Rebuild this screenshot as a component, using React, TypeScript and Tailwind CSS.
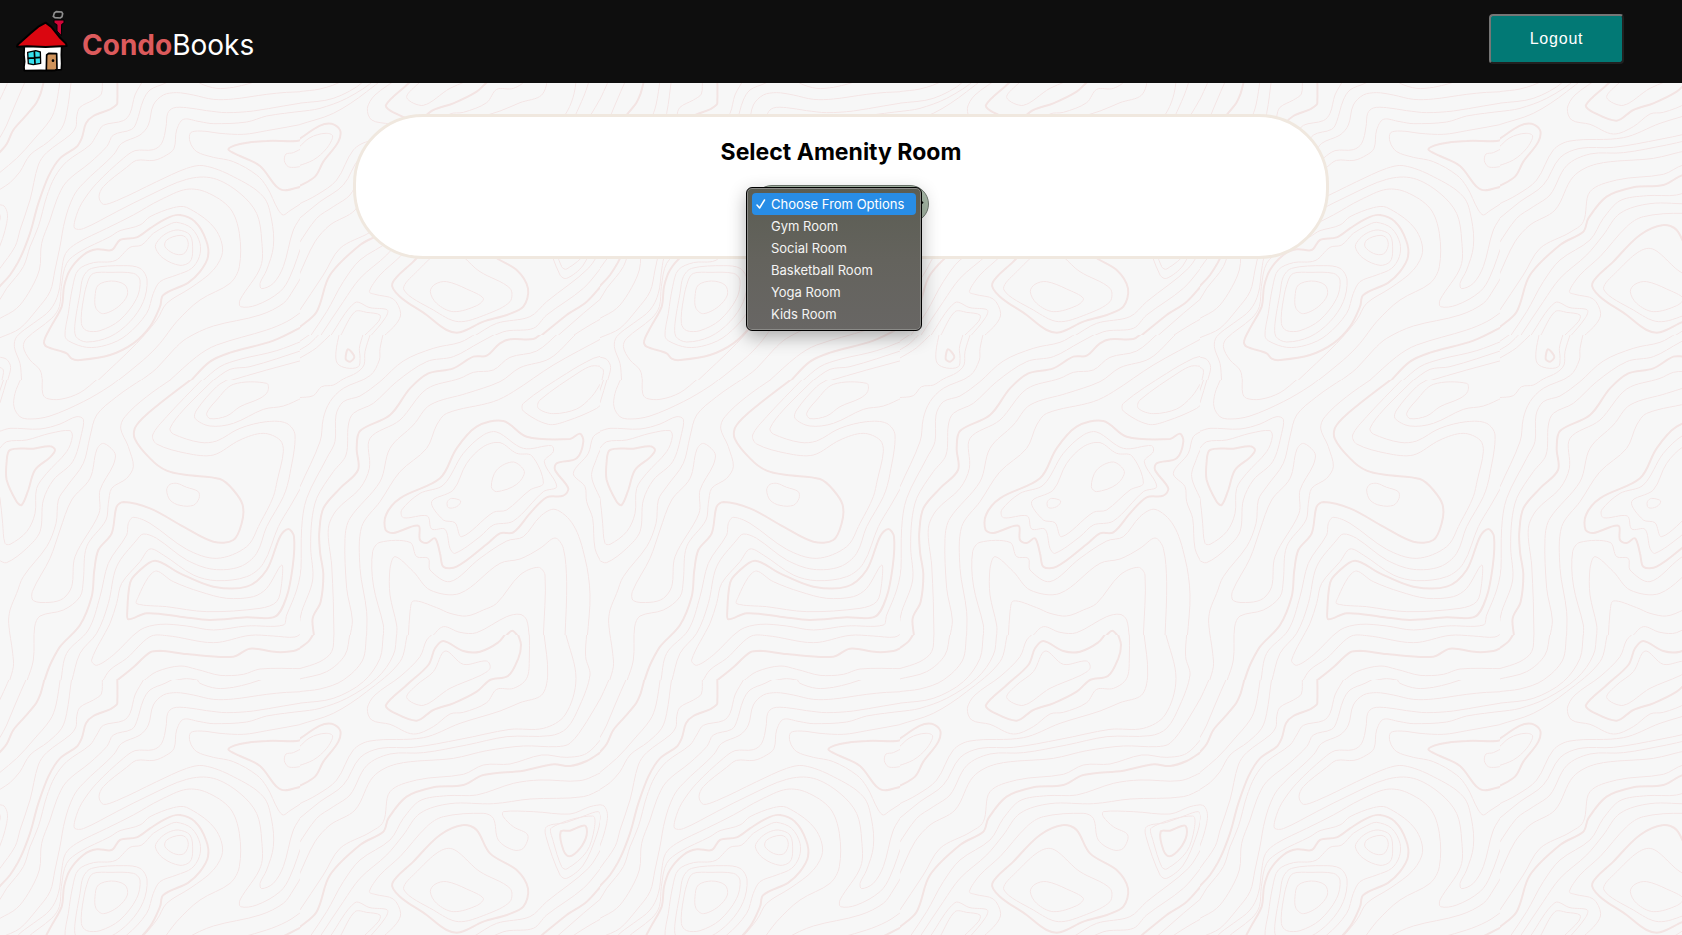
import React from "react";

type Line = { p: string; bold?: boolean };

const t = (p: string): Line => ({ p });
const b = (p: string): Line => ({ p, bold: true });

/* Contour lines, each a list of points on a 900 x 900 sheet. A trailing "z" closes the line. */
const northWest: Line[] = [
  t("30,-8 22,10 0,58 -5,65"),
  t("80,-5 45,75 20,135 0,172 -8,185"),
  b("134,-5 122,40 108,70 75,110 40,150 20,192 0,216 -8,222"),
  t("181,-5 168,75 150,120 100,180 50,235 0,277 -8,284"),
  t("215,-5 200,100 185,145 145,185 90,225 60,275 30,308 0,328 -8,333"),
  t("307,-5 304,42 280,60 240,82 230,110 228,140 210,165 140,218 115,255 90,360 60,450 45,500 0,565 -8,575"),
  b("352,-5 352,60 350,74 330,88 280,108 258,130 245,175 230,200 180,235 145,290 115,370 90,460 60,535 30,585 0,618 -8,626"),
  t("432,-3 405,45 390,100 370,122 310,136 290,165 270,195 200,245 165,290 140,350 115,440 90,500 70,560 20,625 0,658 -8,665"),
  t("520,-3 495,10 450,30 430,60 410,125 395,148 340,165 320,200 270,248 200,305 170,360 150,420 125,490 118,570 85,640 50,685 0,715 -8,718"),
  t("590,-5 600,10 650,25 700,22 750,10 790,-3"),
  t("910,35 860,37 800,43 700,57 640,58 580,45 530,38 490,45 460,75 445,135 420,165 365,190 340,225 250,310 220,350 195,420 180,500 165,570 150,635 110,690 60,745 0,773 -8,776"),
  t("910,68 850,78 760,93 680,98 620,92 560,83 520,84 503,100 498,140 485,190 460,209 405,212 370,235 290,310 245,370 225,420 224,445 250,446 350,395 450,345 560,298 640,295 720,340 770,400 785,480 782,560 720,660 722,680 770,675 840,635 870,590 910,480"),
  t("910,93 800,108 740,126 640,131 600,125 550,118 530,150 522,205 500,225 462,241 410,241 380,262 310,320 297,350 310,373 350,362 470,305 560,265 610,257 700,290 790,350 815,420 820,500 800,570 780,610 785,626 820,610 850,560 880,450 910,400"),
  t("910,132 800,152 730,163 660,160 600,153 572,158 570,185 590,215 640,232 700,245 770,285 800,320 835,390 850,405 870,392 910,366"),
  b("910,177 890,183 800,183 720,192 685,208 720,228 780,258 830,320 855,331 910,318"),
  t("910,203 880,218 858,222 853,242 865,260 885,262 910,258"),
  t("65,905 60,850 43,800 50,770 100,730 150,690 175,640 185,570 197,520 230,490 320,445 400,405 480,360 560,328 620,337 690,385 718,460 718,560 690,610 600,660 530,725 480,790 430,840 350,905"),
  t("128,905 120,870 90,840 70,800 80,775 155,715 178,680 184,620 200,550 240,515 330,470 360,452 420,435 450,410 520,383 560,382 640,440 668,510 640,570 570,625 500,670 470,720 410,790 290,905"),
  t("418,905 470,865 520,810 560,775 640,738 780,705 850,670 880,630 910,580"),
  t("505,905 590,830 650,795 800,750 860,725 910,692"),
  b("570,905 630,845 690,818 820,782 910,739"),
  t("605,905 660,860 720,838 830,812 910,782"),
  t("635,905 690,868 750,860 910,810"),
  t("680,905 800,870 910,840"),
  t("-8,373 12,378 22,400 20,430 8,475 -5,510"),
  t("-4,395 1,412 -4,430"),
  b("540,405 585,425 618,480 624,530 600,575 565,608 490,645 480,680 450,740 400,790 330,825 240,840 215,836 200,820 140,800 132,785 150,745 185,680 192,620 210,570 250,525 290,508 335,510 360,480 410,472 450,445 500,415z"),
  t("530,427 575,445 600,490 598,530 575,565 530,585 480,605 460,640 440,700 380,765 320,795 260,802 210,785 195,768 205,700 218,620 235,570 280,548 345,542 390,502 425,495 460,460 500,437z"),
  t("535,450 570,465 578,510 570,545 540,556 490,535 466,500 480,475 505,457z"),
  t("540,466 560,475 564,500 550,522 520,520 495,500 500,480z"),
  t("370,557 420,565 441,600 430,665 390,725 330,770 260,786 228,770 225,730 240,640 250,590 275,565z"),
  t("330,577 400,580 420,600 410,655 360,720 300,752 260,752 244,730 250,660 265,600 280,580z"),
  t("335,603 375,615 382,645 355,680 310,701 288,685 285,650 295,615z"),
  t("-5,830 20,838 32,862 22,905"),
  t("-5,860 10,870 5,905"),
];

const southWest: Line[] = [
  t("22,-5 0,68 -5,75"),
  t("12,-5 -3,40"),
  t("63,-5 45,40 42,80 60,110 90,117 150,108 250,65 330,18 360,-5"),
  t("127,-5 128,40 140,55 180,58 240,38 295,-5"),
  t("430,-5 350,50 290,105 270,170 250,250 200,320 175,360 168,430 140,500 70,590 50,640 30,690 26,730 38,820 40,860 28,905"),
  t("-5,155 30,145 120,147 180,132 230,110 250,118 245,160 218,245 160,300 130,360 120,455 80,505 20,548 -5,540"),
  t("-5,210 20,185 80,180 150,160 210,152 217,170 200,215 140,280 110,325 105,400 80,455 30,493 15,490 8,430 0,355 -5,340"),
  b("30,210 100,206 150,199 165,210 150,232 105,270 85,330 65,375 50,365 20,300 20,245z"),
  t("518,-5 440,50 375,110 362,145 385,200 400,260 380,295 335,325 325,370 318,420 260,500 250,600 240,650 190,690 120,708 104,740 100,840 80,905"),
  t("310,190 345,220 340,255 300,330 297,400 225,530 215,620 190,655 150,667 100,662 97,635 150,535 180,450 215,360 270,295 290,210z"),
  b("578,-5 480,70 410,135 404,175 450,235 500,272 560,285 660,297 700,330 728,375 725,430 700,480 640,485 550,440 450,385 370,366 350,380 335,460 295,510 283,570 275,650 240,735 180,800 150,855 132,905"),
  t("610,-5 500,110 458,165 470,192 560,220 640,225 720,180 790,160 840,180 850,215 832,300 820,350 780,430 740,500 650,535 560,508 450,430 400,412 385,430 380,465 325,550 300,650 265,750 200,820 182,905"),
  t("645,-5 550,90 510,145 520,162 600,187 650,183 720,145 800,125 860,130 885,165 870,280 850,350 800,440 770,520 720,560 640,568 560,540 470,475 430,462 410,480 350,560 325,670 290,760 240,820 215,905"),
  t("690,-5 650,20 590,90 585,115 630,138 700,130 790,88 850,78 910,52"),
  t("700,13 800,10 803,35 780,55 720,80 680,108 630,116 620,100 650,60z"),
  t("910,310 870,380 835,440 790,550 740,590 650,602 580,585 490,525 450,507 420,545 365,610 350,670 330,730 275,840 290,856 340,825 420,750 480,733 560,738 640,750 740,738 850,735 860,705 890,630 910,540"),
  b("465,542 540,580 640,620 740,620 800,570 840,470 865,447 882,470 878,560 860,650 825,710 740,712 630,720 540,710 440,700 385,718 382,690 390,610 410,580z"),
  t("470,573 520,605 600,635 680,655 760,650 800,625 845,555 845,610 830,665 780,685 620,695 500,680 410,671 415,650 445,592z"),
  t("530,310 560,322 595,335 597,355 580,376 540,376 510,360 500,330 510,313z"),
  t("307,905 330,870 380,835 450,770 500,767 640,788 750,766 820,768 885,771 910,755"),
  b("350,902 400,862 450,817 480,812 560,822 700,830 750,806 830,816 880,813 910,800"),
  t("430,903 470,875 540,858 590,868 660,886 730,883 780,867 910,866"),
  t("515,903 560,896 605,903"),
];

const northEast: Line[] = [
  t("-5,22 30,-2"),
  t("-5,47 30,25 60,-5"),
  t("-5,72 50,38 95,-5"),
  t("118,-5 108,50 112,85 140,99 175,95 180,70 178,40 190,-5"),
  b("144,43 163,65 150,80 137,72z"),
  t("212,-5 195,50 192,90 170,113 130,132 100,150 65,155 40,182 -5,188"),
  t("250,-5 240,40 238,75 210,122 130,160 90,200 70,250 60,320 0,455 -5,462"),
  t("530,-5 480,22 400,40 310,78 240,140 180,183 130,200 108,240 105,320 80,370 20,490 5,580 3,700 -3,740"),
  t("590,-5 540,22 460,65 380,80 290,140 220,205 160,235 145,270 138,360 100,410 50,490 35,560 32,640 38,735 5,830 -3,870"),
  b("725,-5 700,12 630,13 600,25 560,62 520,65 460,100 385,115 330,160 270,240 180,288 170,340 174,405 120,460 70,520 58,590 60,650 70,720 62,800 38,850 42,905"),
  t("775,-5 710,48 630,67 580,105 520,112 480,130 380,162 300,255 210,310 208,400 180,460 110,525 85,580 95,690 100,800 102,905"),
  t("830,-5 750,70 660,98 600,140 500,175 390,210 340,270 270,340 240,440 150,550 135,610 140,760 157,855 150,905"),
  t("910,8 760,90 640,170 580,200 440,235 410,270 380,340 300,410 240,500 185,575 180,700 200,830 200,905"),
  t("910,62 880,70 800,115 670,205 670,228 745,268 800,258 890,220 910,200"),
  t("910,95 875,93 840,110 720,195 715,220 760,236 830,222 875,185 905,140"),
  b("610,258 680,305 810,312 840,296 850,320 830,370 770,385 765,405 805,460 790,482 740,487 690,535 640,592 600,595 560,628 470,695 430,695 420,655 405,610 380,624 360,615 355,572 280,594 257,585 258,540 300,490 420,430 470,340 530,275z"),
  t("590,291 670,340 755,332 760,350 733,380 770,455 730,470 640,558 580,570 540,605 465,655 450,640 435,583 395,582 382,543 310,548 305,525 360,475 430,450 490,355 550,300z"),
  t("600,323 650,355 695,362 730,445 690,465 620,525 580,532 485,605 465,563 430,555 395,500 460,465 500,385 550,335z"),
  t("640,381 673,410 650,448 590,470 574,455 590,405z"),
  t("455,490 482,498 470,515 445,518 442,500z"),
  t("910,286 880,305 865,355 820,415 855,455 860,500 878,550 885,640 905,685"),
  t("910,325 890,370 875,425 905,500"),
  t("862,905 870,780 855,670 820,570 765,523 720,545 670,605 620,618 540,670 450,740 390,705 385,670 350,665 330,622 240,622 218,650 220,750 250,870 250,905"),
  t("795,905 800,740 790,640 765,609 720,640 660,672 600,685 480,775 390,765 340,710 285,665 270,700 270,780 290,870 290,905"),
  t("730,905 735,720 715,697 660,720 590,805 550,825 500,843 450,835 410,818 340,798 330,830 325,905"),
  t("688,905 680,855 660,838 620,845 530,893 480,892 430,875 395,905"),
  b("615,905 637,887 655,905"),
];

const southEast: Line[] = [
  b("42,-5 25,20 -5,42"),
  t("102,-5 95,50 60,80 -5,102"),
  t("150,-5 135,60 80,110 -5,133"),
  t("200,-5 188,75 130,135 60,162 -5,170"),
  t("250,-5 240,70 190,140 100,190 -5,205"),
  t("290,-5 280,60 230,130 140,190 60,220 -5,230"),
  t("323,-5 300,80 200,170 100,235 -5,270"),
  b("-5,314 60,272 95,266 120,285 115,320 70,380 45,425 -5,455"),
  t("-5,338 30,308 75,295 98,303 80,340 40,375 -5,393"),
  t("400,-5 380,15 360,65 300,125 225,180 202,220 215,255 270,268 340,297 400,275 450,237 490,232 560,203 590,163 640,160 680,130 688,70 688,-5"),
  b("618,-5 595,22 540,50 490,48 430,18 405,40 385,90 320,150 258,210 280,232 350,257 400,225 460,205 530,170 570,135 625,122 655,70 663,30 653,-5"),
  t("435,48 490,88 560,78 570,100 540,122 450,160 370,211 320,188 350,150 400,110z"),
  t("732,-5 743,120 725,180 660,203 600,228 480,265 370,308 210,318 160,345 110,435 50,480 -5,508"),
  t("797,-5 828,130 795,240 730,280 630,283 480,313 340,337 240,340 180,368 130,450 60,500 -5,553"),
  t("860,-5 857,65 870,120 840,210 800,280 750,302 620,305 500,330 370,353 270,357 200,392 150,480 100,515 50,550 -5,628"),
  t("910,175 860,260 810,325 770,335 670,333 560,347 460,370 290,387 220,425 165,525 90,570 45,620 -5,725"),
  t("910,305 860,355 800,367 725,360 630,387 550,390 490,418 350,435 270,470 250,560 210,592 120,640 70,720 -5,832"),
  b("910,347 860,378 810,393 760,388 670,407 550,420 490,450 400,457 320,485 265,550 250,590 180,630 90,720 50,830 -5,880"),
  t("910,410 840,437 720,435 640,445 530,480 440,482 360,497 310,550 270,615 180,675 130,740 80,830 30,905"),
  t("910,460 850,485 690,492 580,506 450,506 360,535 310,600 260,660 180,730 130,800 60,905"),
  t("910,508 870,515 810,537 700,530 610,530 610,545 640,575 683,600 670,640 640,645 595,615 580,550 550,535 430,545 380,575 300,665 240,720 208,770 225,778 280,792 302,835 290,865 250,905"),
  t("90,905 165,803 210,818 262,825 255,850 210,905"),
  t("120,905 165,830 200,832 240,840 235,860 190,905"),
  b("490,570 530,585 570,655 650,705 684,760 670,815 620,840 550,860 480,892 440,885 380,840 300,785 277,745 340,680 420,600z"),
  t("445,640 540,710 630,760 630,800 560,838 475,860 400,825 312,765 340,720z"),
  t("440,740 500,762 550,790 530,812 460,830 410,805 391,770 405,748z"),
  t("902,545 895,530 860,540 800,562 740,575 738,605 780,720 800,730 850,690 890,600z"),
  t("878,543 755,578 760,620 785,695 800,702 860,650 883,580z"),
  b("782,590 810,587 855,572 860,600 840,640 808,664 790,645z"),
  t("910,630 865,700 740,800 690,845 590,865 520,905"),
  t("910,690 850,760 740,840 700,880 620,888 575,905"),
  b("910,745 860,800 800,840 720,905"),
  t("910,785 850,835 770,905"),
  t("910,848 870,870 815,905"),
];

/* Runs a smooth curve through the points of a line. */
function smooth(source: string): string {
  const closed = source.endsWith("z");
  const pts = source
    .replace("z", "")
    .split(" ")
    .map((pair) => pair.split(",").map(Number));
  const n = pts.length;
  const at = (i: number) => (closed ? pts[(i + n) % n] : pts[Math.max(0, Math.min(n - 1, i))]);
  let d = `M${pts[0][0]} ${pts[0][1]}`;
  const segments = closed ? n : n - 1;
  for (let i = 0; i < segments; i++) {
    const [p0, p1, p2, p3] = [at(i - 1), at(i), at(i + 1), at(i + 2)];
    const span = Math.hypot(p2[0] - p1[0], p2[1] - p1[1]);
    const before = Math.hypot(p1[0] - p0[0], p1[1] - p0[1]);
    const after = Math.hypot(p3[0] - p2[0], p3[1] - p2[1]);
    const k1 = span / (3 * (span + before));
    const k2 = span / (3 * (span + after));
    const r = Math.round;
    d += `C${r(p1[0] + (p2[0] - p0[0]) * k1)} ${r(p1[1] + (p2[1] - p0[1]) * k1)} ${r(
      p2[0] - (p3[0] - p1[0]) * k2,
    )} ${r(p2[1] - (p3[1] - p1[1]) * k2)} ${p2[0]} ${p2[1]}`;
  }
  return closed ? d + "Z" : d;
}

function Sheet({ lines, x, y }: { lines: Line[]; x: number; y: number }) {
  return (
    <svg x={x} y={y} width="300" height="300" viewBox="0 0 900 900" fill="none">
      {lines.map((line) => (
        <path
          key={line.p}
          d={smooth(line.p)}
          stroke={line.bold ? "#f3e4e3" : "#f4e5e5"}
          strokeWidth={line.bold ? 6 : 3}
        />
      ))}
    </svg>
  );
}

function Topography() {
  return (
    <svg className="absolute inset-0 -z-10 h-full w-full" aria-hidden="true">
      <defs>
        <pattern id="topography" y="80" width="600" height="600" patternUnits="userSpaceOnUse">
          <Sheet lines={northWest} x={0} y={0} />
          <Sheet lines={southWest} x={0} y={300} />
          <Sheet lines={southEast} x={300} y={-45} />
          <Sheet lines={northEast} x={300} y={255} />
          <Sheet lines={southEast} x={300} y={555} />
        </pattern>
      </defs>
      <rect width="100%" height="100%" fill="#f7f7f7" />
      <rect width="100%" height="100%" fill="url(#topography)" />
    </svg>
  );
}

function House() {
  return (
    <svg className="h-[72px] w-[60px]" viewBox="0 0 180 216" fill="none" aria-hidden="true">
      <path d="M127 24l6-4 16 1 3 5-2 9-5 4-16-1-5-4z" stroke="#8f8f8f" strokeWidth="5" />
      <path d="M126 45h30v9l-7 4-1 34-13-14V59l-9-5z" fill="#cf0638" stroke="#000" strokeWidth="3" />
      <path d="M37 122l-1 28 2 20-2 16 1 11 50-1 30 1 31-3 1-18-1-26 1-28z" fill="#fff" stroke="#000" strokeWidth="5" strokeLinejoin="round" />
      <path d="M101 53L79 65 54 86 17 119l-2 6 30-1 56 2 63-3-2-7-20-20-24-30z" fill="#da0610" stroke="#000" strokeWidth="6" strokeLinejoin="round" />
      <path d="M47 142l24-5 14 4 1 34-22 4-15-3z" fill="#35e0ee" stroke="#000" strokeWidth="4" strokeLinejoin="round" />
      <path d="M67 138l2 39M47 160l38-3" stroke="#000" strokeWidth="5" />
      <path d="M103 195l1-45 6-5 24 1 1 47-6 3z" fill="#cf935b" stroke="#000" strokeWidth="5" strokeLinejoin="round" />
      <circle cx="123" cy="167" r="4" fill="#000" />
    </svg>
  );
}

const rooms = ["Choose From Options", "Gym Room", "Social Room", "Basketball Room", "Yoga Room", "Kids Room"];

export default function App() {
  return (
    <div className="relative isolate min-h-screen font-['Inter',sans-serif] text-black">
      <Topography />
      <header className="flex h-[83px] items-start justify-between bg-[#0e0e0e] pr-[58px] pl-3">
        <a href="#home" className="flex items-start pt-[5px]">
          <House />
          <span className="ml-[10px] pt-[22px] text-[28px] leading-9 text-white">
            <span className="font-bold text-[#dc5a5c]">Condo</span>Books
          </span>
        </a>
        <button
          type="button"
          className="mt-[14px] h-[50px] w-[135px] rounded border-2 border-t-[#767676] border-r-[#212121] border-b-[#212121] border-l-[#767676] bg-[#027975] font-['Liberation_Sans',sans-serif] text-base tracking-wider text-white"
        >
          Logout
        </button>
      </header>

      <main className="pt-[31px]">
        <section className="mx-auto flex h-[145px] w-[58%] flex-col items-center rounded-[70px] border-3 border-[#f0e8df] bg-white pt-[19px]">
          <label htmlFor="room" className="text-[23px] leading-8 font-bold">
            Select Amenity Room
          </label>
          <div className="relative mt-[17px]">
            <select
              id="room"
              className="h-[38px] w-[176px] appearance-none rounded-full border border-[#6f786f] bg-[#a9bba9] pl-4 text-sm"
            >
              {rooms.map((room) => (
                <option key={room}>{room}</option>
              ))}
            </select>
            <svg className="pointer-events-none absolute top-[15px] right-[5px] h-2 w-3" viewBox="0 0 12 8" fill="none" aria-hidden="true">
              <path d="M1 2l5 4 5-4" stroke="#000" strokeWidth="2" />
            </svg>
            <ul
              role="listbox"
              aria-label="Rooms"
              className="absolute top-[2px] -left-[7px] w-[176px] rounded-md border border-black bg-linear-to-b from-[#5b5d53] via-[#64635d] to-[#686664] p-[5px] text-[13px] leading-[22px] text-[#f4f4f3] shadow-[inset_0_0_0_1px_#8b8b88,0_6px_18px_rgba(0,0,0,0.3)]"
            >
              {rooms.map((room, index) => (
                <li
                  key={room}
                  role="option"
                  aria-selected={index === 0}
                  className="flex items-center rounded-[4px] whitespace-nowrap aria-selected:bg-[#288de6] aria-selected:text-white"
                >
                  <span className="flex w-[19px] justify-center">
                    {index === 0 && (
                      <svg className="h-[10px] w-[10px]" viewBox="0 0 10 10" fill="none" aria-hidden="true">
                        <path d="M1 6l2.600 3L8.500 1" stroke="#fff" strokeWidth="1.500" strokeLinecap="round" strokeLinejoin="round" />
                      </svg>
                    )}
                  </span>
                  {room}
                </li>
              ))}
            </ul>
          </div>
        </section>
      </main>
    </div>
  );
}
